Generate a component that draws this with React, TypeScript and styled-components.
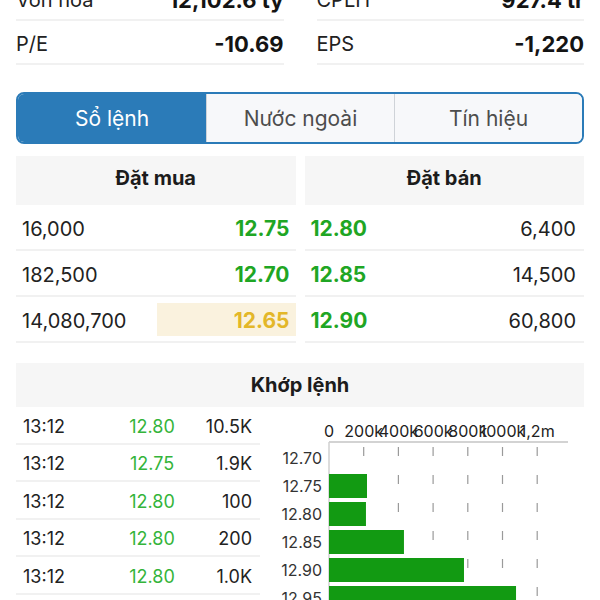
import styled, { createGlobalStyle } from "styled-components"

const GlobalStyle = createGlobalStyle`
    html, body {
        margin: 0;
        padding: 0;
        background: #fff;
        font-family: Inter, "Open Sans", "Liberation Sans", sans-serif;
        color: #222;
        overflow: hidden;
    }
`

const colors = {
    green: "#1fa624",
    lightGreen: "#34b43a",
    yellow: "#e3b729",
    blue: "#2b7bb8",
    line: "#f1f1f1",
    headerBg: "#f6f6f6",
}

// page is scrolled a bit, first stats row is partly hidden
const Page = styled.div`
    margin-top: -23px;
    padding: 0 16px;
    width: 600px;
    box-sizing: border-box;
`

const StatsGrid = styled.div`
    display: grid;
    grid-template-columns: 1fr 1fr;
    column-gap: 33px;
`

const StatRow = styled.div`
    display: flex;
    align-items: center;
    justify-content: space-between;
    height: 44px;
    padding-top: 3px;
    box-sizing: border-box;
    border-bottom: 2px solid ${colors.line};
`

const StatLabel = styled.span`
    font-size: 20px;
    color: #222;
`

const StatValue = styled.span`
    font-size: 22px;
    font-weight: 700;
    color: #141414;
`

const Tabs = styled.div`
    margin-top: 27px;
    display: grid;
    grid-template-columns: 1fr 1fr 1fr;
    height: 52px;
    box-sizing: border-box;
    border: 2px solid ${colors.blue};
    border-radius: 8px;
    overflow: hidden;
`

const Tab = styled.div<{ $active?: boolean }>`
    display: flex;
    align-items: center;
    justify-content: center;
    font-size: 21px;
    background: ${({ $active }) => ($active ? colors.blue : "#f7f8fa")};
    color: ${({ $active }) => ($active ? "#fff" : "#4d4d4d")};
    & + & {
        border-left: 1px solid #cfd3d8;
    }
`

const OrderBook = styled.div`
    margin-top: 12px;
    display: grid;
    grid-template-columns: 1fr 1fr;
    column-gap: 9px;
`

const SideCol = styled.div`
    display: flex;
    flex-direction: column;
`

const SectionHeader = styled.div<{ $height: number; $shift?: number }>`
    height: ${({ $height }) => $height}px;
    box-sizing: border-box;
    padding-bottom: ${({ $shift = 0 }) => $shift}px;
    display: flex;
    align-items: center;
    justify-content: center;
    background: ${colors.headerBg};
    font-size: 20px;
    font-weight: 700;
    color: #1c1c1c;
`

const BookRow = styled.div`
    display: flex;
    align-items: center;
    justify-content: space-between;
    height: 46px;
    padding-top: 3px;
    box-sizing: border-box;
    border-bottom: 2px solid ${colors.line};
`

const Qty = styled.span<{ $side: "buy" | "sell" }>`
    font-size: 20px;
    color: #222;
    padding: ${({ $side }) => ($side === "buy" ? "0 0 0 6px" : "0 8px 0 0")};
`

const Price = styled.span<{ $highlight?: boolean; $side: "buy" | "sell" }>`
    display: flex;
    align-items: center;
    justify-content: ${({ $side }) => ($side === "buy" ? "flex-end" : "flex-start")};
    width: 139px;
    height: 33px;
    margin-top: -2px;
    padding-top: 2px;
    box-sizing: border-box;
    padding-right: ${({ $side }) => ($side === "buy" ? "6px" : "0")};
    padding-left: ${({ $side }) => ($side === "buy" ? "0" : "6px")};
    font-size: 21px;
    font-weight: 700;
    background: ${({ $highlight }) => ($highlight ? "#faf2de" : "transparent")};
    color: ${({ $highlight }) => ($highlight ? colors.yellow : colors.green)};
`

const MatchSection = styled.div`
    margin-top: 20px;
`

const MatchBody = styled.div`
    display: flex;
    gap: 10px;
`

const TradeList = styled.div`
    width: 244px;
    flex-shrink: 0;
`

const TradeRow = styled.div`
    display: grid;
    grid-template-columns: 89px 80px 1fr;
    align-items: center;
    height: 37.5px;
    box-sizing: border-box;
    padding: 3px 8px 0 7px;
    border-bottom: 2px solid ${colors.line};
    font-size: 18px;
    color: #222;
`

const TradePrice = styled.span`
    text-align: center;
    color: ${colors.lightGreen};
`

const TradeVol = styled.span`
    text-align: right;
`

const ChartBox = styled.div`
    flex: 1;
    height: 200px;
    svg {
        display: block;
    }
`

const stats = [
    ["Vốn hóa", "12,102.6 tỷ", "CPLH", "927.4 tr"],
    ["P/E", "-10.69", "EPS", "-1,220"],
]

const buys = [
    { qty: "16,000", price: "12.75" },
    { qty: "182,500", price: "12.70" },
    { qty: "14,080,700", price: "12.65", highlight: true },
]

const sells = [
    { qty: "6,400", price: "12.80" },
    { qty: "14,500", price: "12.85" },
    { qty: "60,800", price: "12.90" },
]

const trades = [
    ["13:12", "12.80", "10.5K"],
    ["13:12", "12.75", "1.9K"],
    ["13:12", "12.80", "100"],
    ["13:12", "12.80", "200"],
    ["13:12", "12.80", "1.0K"],
    ["13:12", "12.80", "300"],
]

const volumes = [
    { price: "12.70", vol: 0 },
    { price: "12.75", vol: 219 },
    { price: "12.80", vol: 213 },
    { price: "12.85", vol: 432 },
    { price: "12.90", vol: 778 },
    { price: "12.95", vol: 1078 },
]

const X0 = 59
const STEP = 34.7 // px per 200k
const ticks = ["0", "200k", "400k", "600k", "800k", "1000k", "1,2m"]

function VolumeChart() {
    return (
        <svg width="314" height="200" viewBox="0 0 314 200">
            {ticks.map((t, i) => (
                <text
                    key={t}
                    x={X0 + i * STEP}
                    y="30"
                    textAnchor="middle"
                    fontSize="16"
                    fill="#222"
                    fontFamily="Inter, sans-serif"
                >
                    {t}
                </text>
            ))}
            <line x1={X0} y1="35" x2="298" y2="35" stroke="#c4c4c4" strokeWidth="1.5" />
            <line x1={X0} y1="35" x2={X0} y2="200" stroke="#d0d0d0" strokeWidth="1.5" />
            {ticks.slice(1).map((t, i) => (
                <line
                    key={t}
                    x1={X0 + (i + 1) * STEP}
                    y1="40"
                    x2={X0 + (i + 1) * STEP}
                    y2="200"
                    stroke="#9a9a9a"
                    strokeWidth="1.2"
                    strokeDasharray="9 19"
                />
            ))}
            {volumes.map((v, i) => {
                const cy = 51 + i * 28
                return (
                    <g key={v.price}>
                        <text
                            x="52"
                            y={cy + 5.5}
                            textAnchor="end"
                            fontSize="16"
                            fill="#333"
                            fontFamily="Inter, sans-serif"
                        >
                            {v.price}
                        </text>
                        {v.vol > 0 && (
                            <rect x={X0} y={cy - 12} width={(v.vol / 200) * STEP} height="24" fill="#129a12" />
                        )}
                    </g>
                )
            })}
        </svg>
    )
}

export default function App() {
    return (
        <>
            <GlobalStyle />
            <Page>
                <StatsGrid>
                    {stats.map((r) => (
                        <>
                            <StatRow key={r[0]}>
                                <StatLabel>{r[0]}</StatLabel>
                                <StatValue>{r[1]}</StatValue>
                            </StatRow>
                            <StatRow key={r[2]}>
                                <StatLabel>{r[2]}</StatLabel>
                                <StatValue>{r[3]}</StatValue>
                            </StatRow>
                        </>
                    ))}
                </StatsGrid>

                <Tabs>
                    <Tab $active>Sổ lệnh</Tab>
                    <Tab>Nước ngoài</Tab>
                    <Tab>Tín hiệu</Tab>
                </Tabs>

                <OrderBook>
                    <SideCol>
                        <SectionHeader $height={49} $shift={5}>
                            Đặt mua
                        </SectionHeader>
                        {buys.map((b) => (
                            <BookRow key={b.price}>
                                <Qty $side="buy">{b.qty}</Qty>
                                <Price $side="buy" $highlight={b.highlight}>
                                    {b.price}
                                </Price>
                            </BookRow>
                        ))}
                    </SideCol>
                    <SideCol>
                        <SectionHeader $height={49} $shift={5}>
                            Đặt bán
                        </SectionHeader>
                        {sells.map((s) => (
                            <BookRow key={s.price}>
                                <Price $side="sell">{s.price}</Price>
                                <Qty $side="sell">{s.qty}</Qty>
                            </BookRow>
                        ))}
                    </SideCol>
                </OrderBook>

                <MatchSection>
                    <SectionHeader $height={44}>Khớp lệnh</SectionHeader>
                    <MatchBody>
                        <TradeList>
                            {trades.map((t, i) => (
                                <TradeRow key={i}>
                                    <span>{t[0]}</span>
                                    <TradePrice>{t[1]}</TradePrice>
                                    <TradeVol>{t[2]}</TradeVol>
                                </TradeRow>
                            ))}
                        </TradeList>
                        <ChartBox>
                            <VolumeChart />
                        </ChartBox>
                    </MatchBody>
                </MatchSection>
            </Page>
        </>
    )
}
